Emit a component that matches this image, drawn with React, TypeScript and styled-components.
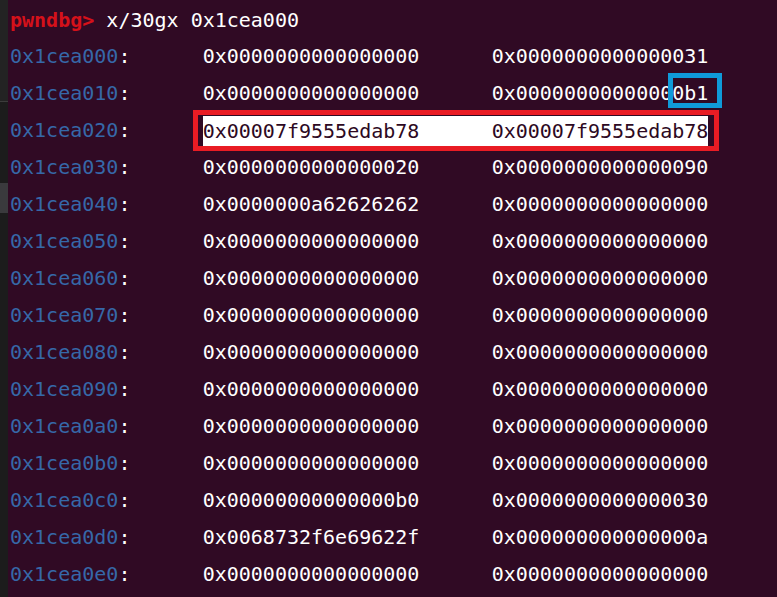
import React from "react";
import styled, { createGlobalStyle } from "styled-components";

const Global = createGlobalStyle`
  html, body { margin: 0; padding: 0; background: #300a24; overflow: hidden; }
  #root { width: 777px; height: 597px; }
`;

const Frame = styled.div`
  display: flex;
  width: 777px;
  height: 597px;
  overflow: hidden;
`;

const Sidebar = styled.div`
  width: 8px;
  flex: none;
  display: flex;
  flex-direction: column;
  background: #1c1c1c;
`;

const SideBlock = styled.div<{ $h: number; $c: string }>`
  height: ${(p) => p.$h}px;
  flex: none;
  background: ${(p) => p.$c};
`;

const Terminal = styled.div`
  flex: 1;
  background: #300a24;
  padding: 3px 0 0 2px;
  font-family: "DejaVu Sans Mono", "Liberation Mono", monospace;
  font-size: 20px;
  color: #ffffff;
  white-space: pre;
`;

const PromptLine = styled.div`
  height: 35px;
  line-height: 35px;
  display: flex;
`;

const Prompt = styled.span`
  color: #d5111a;
  font-weight: bold;
`;

const Row = styled.div`
  display: grid;
  grid-template-columns: 16ch auto;
  height: 37px;
  line-height: 37px;
  align-items: center;
`;

const Addr = styled.span`
  color: #3668a8;
`;

const Values = styled.div`
  display: flex;
  align-items: center;
`;

const Val = styled.span<{ $wide?: boolean }>`
  display: inline-block;
  width: ${(p) => (p.$wide ? "24ch" : "auto")};
`;

const Highlight = styled.span`
  position: relative;
  display: inline-flex;
  height: 30px;
  line-height: 30px;
  background: #ffffff;
  color: #2d0922;
`;

const RedBox = styled.span`
  position: absolute;
  top: -6px;
  bottom: -5px;
  left: -10px;
  right: -11px;
  border: 5px solid #e91c24;
  box-sizing: border-box;
`;

const Marked = styled.span`
  position: relative;
`;

const BlueBox = styled.span`
  position: absolute;
  top: -8px;
  bottom: -3px;
  left: -4px;
  right: -14px;
  border: 5px solid #0f9ad9;
  box-sizing: border-box;
`;

const rows: [string, string, string][] = [
  ["0x1cea000", "0x0000000000000000", "0x0000000000000031"],
  ["0x1cea010", "0x0000000000000000", "0x00000000000000b1"],
  ["0x1cea020", "0x00007f9555edab78", "0x00007f9555edab78"],
  ["0x1cea030", "0x0000000000000020", "0x0000000000000090"],
  ["0x1cea040", "0x0000000a62626262", "0x0000000000000000"],
  ["0x1cea050", "0x0000000000000000", "0x0000000000000000"],
  ["0x1cea060", "0x0000000000000000", "0x0000000000000000"],
  ["0x1cea070", "0x0000000000000000", "0x0000000000000000"],
  ["0x1cea080", "0x0000000000000000", "0x0000000000000000"],
  ["0x1cea090", "0x0000000000000000", "0x0000000000000000"],
  ["0x1cea0a0", "0x0000000000000000", "0x0000000000000000"],
  ["0x1cea0b0", "0x0000000000000000", "0x0000000000000000"],
  ["0x1cea0c0", "0x00000000000000b0", "0x0000000000000030"],
  ["0x1cea0d0", "0x0068732f6e69622f", "0x000000000000000a"],
  ["0x1cea0e0", "0x0000000000000000", "0x0000000000000000"],
];

export default function App() {
  return (
    <>
      <Global />
      <Frame>
        <Sidebar>
          <SideBlock $h={101} $c="#232323" />
          <SideBlock $h={1} $c="#3c3c3c" />
          <SideBlock $h={81} $c="#1c1c1c" />
          <SideBlock $h={30} $c="#3a3a3d" />
        </Sidebar>
        <Terminal>
          <PromptLine>
            <Prompt>pwndbg&gt;</Prompt>
            <span> x/30gx 0x1cea000</span>
          </PromptLine>
          {rows.map(([addr, a, b], i) => (
            <Row key={addr}>
              <span>
                <Addr>{addr}</Addr>:
              </span>
              {i === 2 ? (
                <Values>
                  <Highlight>
                    <Val $wide>{a}</Val>
                    <Val>{b}</Val>
                    <RedBox />
                  </Highlight>
                </Values>
              ) : i === 1 ? (
                <Values>
                  <Val $wide>{a}</Val>
                  <Val>
                    {b.slice(0, 15)}
                    <Marked>
                      {b.slice(15)}
                      <BlueBox />
                    </Marked>
                  </Val>
                </Values>
              ) : (
                <Values>
                  <Val $wide>{a}</Val>
                  <Val>{b}</Val>
                </Values>
              )}
            </Row>
          ))}
        </Terminal>
      </Frame>
    </>
  );
}
